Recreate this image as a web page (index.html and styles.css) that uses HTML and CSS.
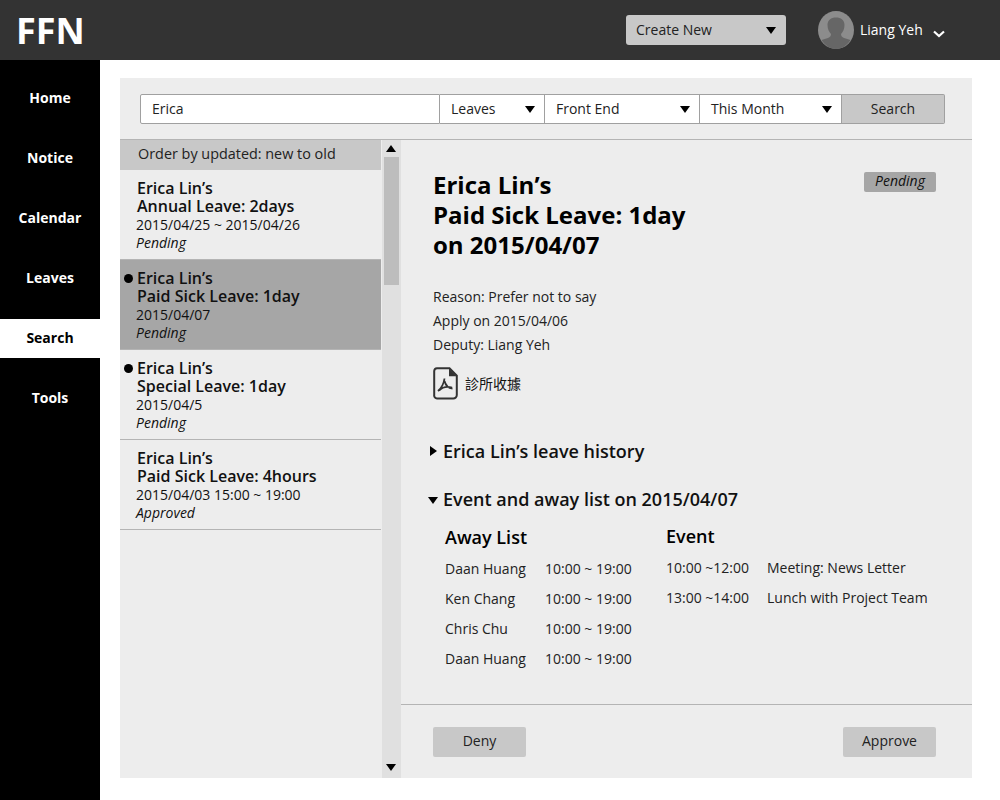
FILE: index.html
```html
<!DOCTYPE html>
<html lang="en">
<head>
    <meta charset="UTF-8">
    <meta name="viewport" content="width=device-width, initial-scale=1.0">
    <title>FFN Search</title>
    <link rel="stylesheet" href="styles.css">
</head>
<body>
    <header class="topbar">
        <div class="logo">FFN</div>
        <div class="create-new">
            <span>Create New</span>
            <span class="arrow-down"></span>
        </div>
        <div class="user">
            <svg class="avatar" width="36" height="38" viewBox="0 0 36 38">
                <ellipse cx="18" cy="19" rx="18" ry="19" fill="#8c8c8c"/>
                <path d="M9.5 14c0-5 3.500-7.500 8.500-7.500s8.500 2.500 8.500 7.500c0 4-1.500 7-3.500 9 0 2 1 3 3 4l6.500 2c-3 5-8.500 9-14.500 9s-11.500-4-14.500-9l6.500-2c2-1 3-2 3-4-2-2-3.500-5-3.500-9z" fill="#666"/>
            </svg>
            <span class="user-name">Liang Yeh</span>
            <svg class="chevron" width="12" height="8" viewBox="0 0 12 8">
                <path d="M1 1.500l5 4.500 5-4.500" fill="none" stroke="#fff" stroke-width="2.200"/>
            </svg>
        </div>
    </header>

    <div class="main">
        <nav class="sidebar">
            <a class="nav-item">Home</a>
            <a class="nav-item">Notice</a>
            <a class="nav-item">Calendar</a>
            <a class="nav-item">Leaves</a>
            <a class="nav-item active">Search</a>
            <a class="nav-item">Tools</a>
        </nav>

        <div class="panel">
            <form class="search-bar">
                <div class="field field-text">Erica</div>
                <div class="field field-leaves"><span>Leaves</span><span class="arrow-down"></span></div>
                <div class="field field-team"><span>Front End</span><span class="arrow-down"></span></div>
                <div class="field field-time"><span>This Month</span><span class="arrow-down"></span></div>
                <div class="search-btn">Search</div>
            </form>

            <div class="content">
                <div class="list">
                    <div class="order">Order by updated: new to old</div>

                    <div class="item">
                        <div class="item-title">Erica Lin’s<br>Annual Leave: 2days</div>
                        <div class="item-date">2015/04/25 ~ 2015/04/26</div>
                        <div class="item-status">Pending</div>
                    </div>
                    <div class="item selected unread">
                        <div class="item-title">Erica Lin’s<br>Paid Sick Leave: 1day</div>
                        <div class="item-date">2015/04/07</div>
                        <div class="item-status">Pending</div>
                    </div>
                    <div class="item unread">
                        <div class="item-title">Erica Lin’s<br>Special Leave: 1day</div>
                        <div class="item-date">2015/04/5</div>
                        <div class="item-status">Pending</div>
                    </div>
                    <div class="item">
                        <div class="item-title">Erica Lin’s<br>Paid Sick Leave: 4hours</div>
                        <div class="item-date">2015/04/03 15:00 ~ 19:00</div>
                        <div class="item-status">Approved</div>
                    </div>
                </div>

                <div class="scrollbar">
                    <span class="arrow-up"></span>
                    <div class="thumb"></div>
                    <span class="arrow-down"></span>
                </div>

                <div class="detail">
                    <div class="detail-body">
                        <div class="detail-head">
                            <h1>Erica Lin’s<br>Paid Sick Leave: 1day<br>on 2015/04/07</h1>
                            <span class="badge">Pending</span>
                        </div>

                        <p class="info">Reason: Prefer not to say</p>
                        <p class="info">Apply on 2015/04/06</p>
                        <p class="info">Deputy: Liang Yeh</p>

                        <div class="attachment">
                            <svg class="pdf-icon" width="25" height="33" viewBox="0 0 25 33">
                                <path d="M4 1.200h12.500l7.300 7.500V28a3.500 3.500 0 0 1-3.500 3.500H4A3 3 0 0 1 1.200 28V4A3 3 0 0 1 4 1.200z" fill="none" stroke="#333" stroke-width="2"/>
                                <path d="M16 1.500v7.800h7.500z" fill="#333"/>
                                <path d="M11.500 11.500c-.6 4.500-2.500 9-6.500 12.500M11.500 14c1 4 3.500 7 8 7.500M6 23.500c3-3 8-4.500 13-3" fill="none" stroke="#333" stroke-width="1.800"/>
                            </svg>
                            <span class="attachment-name">診所收據</span>
                        </div>

                        <div class="section-title section-history"><span class="arrow-right"></span>Erica Lin’s leave history</div>
                        <div class="section-title section-event"><span class="arrow-open"></span>Event and away list on 2015/04/07</div>

                        <div class="tables">
                            <div class="away">
                                <h2>Away List</h2>
                                <div class="away-row"><span class="away-name">Daan Huang</span><span>10:00 ~ 19:00</span></div>
                                <div class="away-row"><span class="away-name">Ken Chang</span><span>10:00 ~ 19:00</span></div>
                                <div class="away-row"><span class="away-name">Chris Chu</span><span>10:00 ~ 19:00</span></div>
                                <div class="away-row"><span class="away-name">Daan Huang</span><span>10:00 ~ 19:00</span></div>
                            </div>
                            <div class="events">
                                <h2>Event</h2>
                                <div class="event-row"><span class="event-time">10:00 ~12:00</span><span>Meeting: News Letter</span></div>
                                <div class="event-row"><span class="event-time">13:00 ~14:00</span><span>Lunch with Project Team</span></div>
                            </div>
                        </div>
                    </div>

                    <div class="actions">
                        <div class="btn">Deny</div>
                        <div class="btn">Approve</div>
                    </div>
                </div>
            </div>
        </div>
    </div>
</body>
</html>
```

FILE: styles.css
```css
* {
    box-sizing: border-box;
}

body {
    font-family: "Open Sans", sans-serif;
    font-size: 14px;
    color: #111;
    background-color: #fff;
    margin: 0;
    height: 800px;
    overflow: hidden;
}

/* Small triangles */
.arrow-down,
.arrow-open {
    display: block;
    width: 0;
    height: 0;
    border-left: 5.5px solid transparent;
    border-right: 5.5px solid transparent;
    border-top: 7px solid #000;
}

.arrow-up {
    display: block;
    width: 0;
    height: 0;
    border-left: 5.5px solid transparent;
    border-right: 5.5px solid transparent;
    border-bottom: 7px solid #000;
}

.arrow-right {
    display: block;
    width: 0;
    height: 0;
    border-top: 5.5px solid transparent;
    border-bottom: 5.5px solid transparent;
    border-left: 7px solid #000;
    margin: 0 6px 0 1px;
}

.arrow-open {
    margin: 2px 5px 0 -1px;
}

/* Top bar */
.topbar {
    height: 60px;
    background-color: #333;
    display: flex;
    align-items: center;
}

.logo {
    font-size: 36px;
    font-weight: 700;
    color: #fff;
    margin-left: 16px;
    width: 610px;
}

.create-new {
    width: 160px;
    height: 30px;
    background-color: #c8c8c8;
    border-radius: 3px;
    display: flex;
    align-items: center;
    justify-content: space-between;
    padding: 0 10px 2px;
    color: #222;
}

.create-new .arrow-down {
    margin-top: 3px;
}

.user {
    display: flex;
    align-items: center;
    margin-left: 32px;
    color: #fff;
}

.avatar {
    display: block;
}

.user-name {
    margin: 0 0 2px 6px;
}

.chevron {
    margin: 8px 0 0 10px;
}

/* Sidebar */
.main {
    display: flex;
    height: 740px;
}

.sidebar {
    width: 100px;
    background-color: #000;
    padding-top: 19px;
}

.nav-item {
    display: block;
    height: 39px;
    line-height: 37px;
    margin-bottom: 21px;
    text-align: center;
    font-weight: 700;
    color: #fff;
}

.nav-item.active {
    background-color: #fff;
    color: #000;
}

/* Main panel */
.panel {
    width: 852px;
    height: 700px;
    margin: 18px 0 0 20px;
    background-color: #ededed;
    display: flex;
    flex-direction: column;
}

.search-bar {
    height: 62px;
    padding: 16px 0 0 20px;
    display: flex;
    border-bottom: 1px solid #b4b4b4;
    margin: 0;
}

.field {
    height: 30px;
    background-color: #fff;
    border: 1px solid #a0a0a0;
    border-left: none;
    display: flex;
    align-items: center;
    justify-content: space-between;
    padding: 0 9px 2px 11px;
    color: #222;
}

.field .arrow-down {
    margin-top: 2px;
}

.field-text {
    width: 300px;
    border-left: 1px solid #a0a0a0;
    border-radius: 2px 0 0 2px;
}

.field-leaves {
    width: 105px;
}

.field-team {
    width: 155px;
}

.field-time {
    width: 142px;
}

.search-btn {
    width: 103px;
    height: 30px;
    line-height: 28px;
    background-color: #c8c8c8;
    border: 1px solid #a0a0a0;
    border-left: none;
    border-radius: 0 2px 2px 0;
    text-align: center;
    color: #222;
}

.content {
    flex: 1;
    display: flex;
    min-height: 0;
}

/* Leave list */
.list {
    width: 261px;
}

.order {
    height: 30px;
    line-height: 27px;
    font-size: 14.4px;
    background-color: #c8c8c8;
    padding-left: 18px;
    color: #222;
}

.item {
    position: relative;
    height: 90px;
    padding: 9px 0 0 16px;
    border-bottom: 1px solid #b4b4b4;
}

.item.selected {
    background-color: #a6a6a6;
}

.item.unread::before {
    content: "";
    position: absolute;
    left: 4px;
    top: 14px;
    width: 9px;
    height: 9px;
    border-radius: 50%;
    background-color: #000;
}

.item-title {
    font-size: 16px;
    line-height: 18px;
    font-weight: 600;
    padding-left: 1px;
}

.item-date {
    line-height: 18px;
    margin-top: 1px;
}

.item-status {
    font-style: italic;
    line-height: 18px;
}

/* Scrollbar */
.scrollbar {
    width: 19px;
    margin-left: 1px;
    background-color: #e0e0e0;
    display: flex;
    flex-direction: column;
    align-items: center;
    padding: 5px 0 7px;
}

.scrollbar .arrow-up,
.scrollbar .arrow-down {
    margin-right: 1px;
}

.thumb {
    width: 15px;
    height: 128px;
    background-color: #bdbdbd;
    margin: 5px 0 auto;
}

/* Detail */
.detail {
    flex: 1;
    display: flex;
    flex-direction: column;
}

.detail-body {
    flex: 1;
    padding: 30px 36px 0 32px;
}

.detail-head {
    display: flex;
    justify-content: space-between;
    align-items: flex-start;
    margin-bottom: 25px;
}

h1 {
    font-size: 24px;
    line-height: 30px;
    font-weight: 700;
    margin: 0;
    color: #000;
}

.badge {
    width: 72px;
    height: 20px;
    line-height: 18px;
    background-color: #a6a6a6;
    border-radius: 2px;
    text-align: center;
    font-style: italic;
    margin-top: 2px;
    color: #111;
}

.info {
    line-height: 24px;
    margin: 0;
    color: #222;
}

.attachment {
    display: flex;
    align-items: center;
    margin-top: 9px;
    height: 33px;
}

.pdf-icon {
    margin-top: 2px;
}

.attachment-name {
    font-family: "Noto Sans CJK TC", sans-serif;
    margin-left: 7px;
    font-size: 14px;
}

.section-title {
    display: flex;
    align-items: center;
    font-size: 18px;
    font-weight: 600;
    line-height: 24px;
    margin-left: -4px;
}

.section-history {
    margin-top: 40px;
}

.section-event {
    margin-top: 24px;
}

.tables {
    display: flex;
    margin: 13px 0 0 12px;
}

h2 {
    font-size: 18px;
    font-weight: 600;
    line-height: 24px;
    margin: 0 0 5px;
    color: #000;
}

.away {
    width: 221px;
    padding-top: 1px;
}

.away-row,
.event-row {
    display: flex;
    height: 30px;
    line-height: 30px;
    color: #222;
}

.away-name {
    width: 100px;
}

.event-time {
    width: 101px;
}

/* Footer buttons */
.actions {
    height: 74px;
    border-top: 1px solid #b4b4b4;
    display: flex;
    justify-content: space-between;
    padding: 22px 36px 0 32px;
}

.btn {
    width: 93px;
    height: 30px;
    line-height: 28px;
    background-color: #c8c8c8;
    border-radius: 2px;
    text-align: center;
    color: #222;
}
```
